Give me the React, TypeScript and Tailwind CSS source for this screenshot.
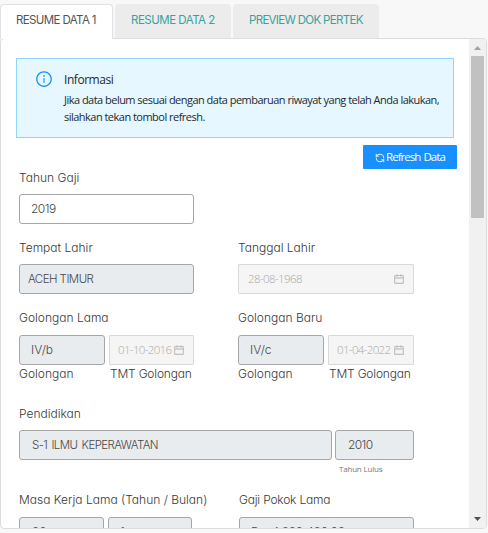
import type { ReactNode } from "react";
import { RefreshCcw } from "lucide-react";
import { AiOutlineCalendar, AiOutlineInfoCircle } from "react-icons/ai";

function Label({ children, className = "" }: { children: ReactNode; className?: string }) {
  return <div className={`h-[18px] text-[12px] leading-[19px] whitespace-nowrap text-[#383838] ${className}`}>{children}</div>;
}

function Field({ children, className = "" }: { children?: ReactNode; className?: string }) {
  return (
    <div className={`flex h-[30px] shrink-0 items-center rounded-[3px] border border-[#a6a6a6] whitespace-nowrap text-[#484848] ${className}`}>
      {children}
    </div>
  );
}

function DateField({ value, className = "" }: { value: string; className?: string }) {
  return (
    <div className={`flex h-[30px] items-center justify-between rounded-[1px] border border-[#d9d9d9] bg-[#f5f5f5] pr-2 font-['Open_Sans',sans-serif] text-[11.5px] font-light whitespace-nowrap text-[#a8a8a8] ${className}`}>
      <span>{value}</span>
      <AiOutlineCalendar className="size-3 shrink-0 text-[#b0b0b0]" />
    </div>
  );
}

function Golongan({ title, value, date }: { title: string; value: string; date: string }) {
  return (
    <div>
      <Label>{title}</Label>
      <div className="mt-[9px] flex gap-1">
        <Field className="w-[86px] bg-[#e9ecef] pl-[11px] text-[12px]">{value}</Field>
        <DateField value={date} className="w-0 grow pl-2 tracking-[-0.65px]" />
      </div>
      <div className="mt-[-1px] flex">
        <Label className="w-[91px]">Golongan</Label>
        <Label className="tracking-[-0.2px]">TMT Golongan</Label>
      </div>
    </div>
  );
}

export default function App() {
  return (
    <div className="flex h-[533px] w-[488px] flex-col overflow-hidden bg-[#f8f8f8] font-['Inter',sans-serif] font-light [font-feature-settings:'cv11']">
      <div className="flex h-[38px] shrink-0 items-start gap-[2px] pt-1 text-[11.5px] leading-[33px] font-normal whitespace-nowrap text-[#35a3a0]">
        <div className="z-10 h-[35px] w-[113px] rounded-t-[4px] border border-b-0 border-[#dee2e6] bg-white pl-[15px] leading-[31px] tracking-[-0.62px] text-[#4f555b]">RESUME DATA 1</div>
        <div className="h-[34px] w-[116px] rounded-t-[4px] bg-[#ececec] pl-4 tracking-[-0.5px]">RESUME DATA 2</div>
        <div className="h-[34px] w-[146px] rounded-t-[4px] bg-[#ececec] pl-4 tracking-[-0.68px]">PREVIEW DOK PERTEK</div>
      </div>
      <div className="flex h-[491px] w-[487px] overflow-hidden rounded-[4px] border border-[#dcdcdc] bg-white">
        <div className="flex w-[468px] shrink-0 flex-col">
          <div className="mt-[19px] ml-[15px] flex h-20 w-[438px] shrink-0 border border-[#91d5ff] bg-[#e6f7ff] pt-[11px] pl-[18px] font-['Open_Sans',sans-serif] font-normal text-[#222a30]">
            <AiOutlineInfoCircle className="size-[18px] shrink-0 text-[#1890ff]" />
            <div className="ml-[11px] whitespace-nowrap">
              <div className="text-[12px] leading-[20px] tracking-[-0.45px]">Informasi</div>
              <div className="mt-px text-[11px] leading-[17px] tracking-[-0.52px]">
                Jika data belum sesuai dengan data pembaruan riwayat yang telah Anda lakukan,
                <br />
                silahkan tekan tombol refresh.
              </div>
            </div>
          </div>
          <div className="mt-[7px] mr-[12px] flex h-6 w-[94px] shrink-0 items-center self-end rounded-[1px] bg-[#1890ff] pl-3 font-['Open_Sans',sans-serif] text-[11.5px] font-normal tracking-[-0.96px] whitespace-nowrap text-white [word-spacing:1px]">
            <RefreshCcw className="mt-0.5 mr-px size-[10px] opacity-85" strokeWidth={2.5} />
            <span>Refresh Data</span>
          </div>
          <div className="ml-[18px] w-[395px]">
            <Label className="mt-[-1px]">Tahun Gaji</Label>
            <Field className="mt-[8px] w-[175px] bg-white pl-[11px] text-[12px] tracking-[-0.5px]">2019</Field>
            <div className="mt-[14px] grid grid-cols-[175px_176px] gap-x-[44px]">
              <div>
                <Label>Tempat Lahir</Label>
                <Field className="mt-[8px] bg-[#e9ecef] pt-px pl-2 text-[11.5px] tracking-[-0.55px]">ACEH TIMUR</Field>
              </div>
              <div>
                <Label>Tanggal Lahir</Label>
                <DateField value="28-08-1968" className="mt-[8px] pl-[9px] tracking-[-0.6px]" />
              </div>
            </div>
            <div className="mt-[14px] grid grid-cols-[175px_176px] gap-x-[44px]">
              <Golongan title="Golongan Lama" value="IV/b" date="01-10-2016" />
              <Golongan title="Golongan Baru" value="IV/c" date="01-04-2022" />
            </div>
            <Label className="mt-[22px]">Pendidikan</Label>
            <div className="mt-[8px] flex gap-[3px]">
              <Field className="w-[313px] bg-[#e9ecef] pt-px pl-3 text-[11.5px] tracking-[-0.58px] [word-spacing:1.5px]">S-1 ILMU KEPERAWATAN</Field>
              <Field className="w-[79px] bg-[#e9ecef] pl-3 text-[12px] tracking-[-0.6px]">2010</Field>
            </div>
            <div className="mt-[3px] ml-[320px] h-3 font-['Open_Sans',sans-serif] text-[8px] leading-3 font-normal tracking-[-0.2px] whitespace-nowrap text-[#777]">Tahun Lulus</div>
            <div className="mt-[15px] grid grid-cols-[175px_176px] gap-x-[44px]">
              <Label>Masa Kerja Lama (Tahun / Bulan)</Label>
              <Label className="pl-px tracking-[-0.2px]">Gaji Pokok Lama</Label>
            </div>
            <div className="mt-[9px] flex text-[12px]">
              <Field className="w-[85px] bg-[#e9ecef] pl-3">20</Field>
              <Field className="ml-1 w-[84px] bg-[#e9ecef] pl-[11px]">1</Field>
              <Field className="ml-[47px] w-[175px] bg-[#e9ecef] pl-[11px] tracking-[-0.2px]">Rp. 4.832.400,00</Field>
            </div>
          </div>
        </div>
        <div className="flex w-[17px] shrink-0 flex-col items-center bg-[#f1f1f1]">
          <svg className="mt-[7px] h-1 w-[7px] shrink-0 fill-[#a3a3a3]" viewBox="0 0 7 4"><path d="M0 4 3.5 0 7 4z" /></svg>
          <div className="mt-[6px] h-[162px] w-[13px] shrink-0 bg-[#c1c1c1]" />
          <svg className="mt-auto mb-[7px] h-1 w-[7px] shrink-0 fill-[#505050]" viewBox="0 0 7 4"><path d="M0 0h7L3.5 4z" /></svg>
        </div>
      </div>
    </div>
  );
}
